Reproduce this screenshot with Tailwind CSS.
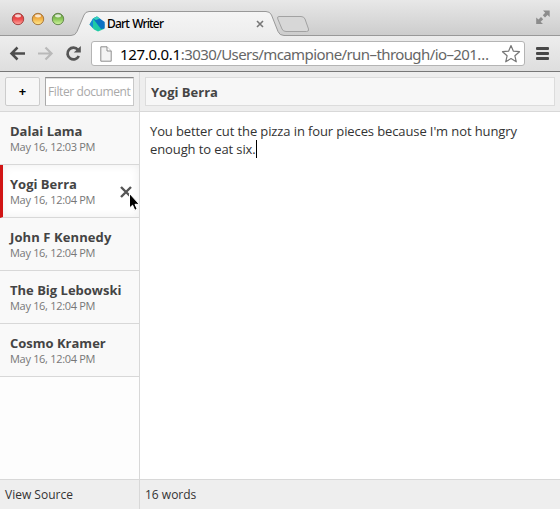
<!DOCTYPE html>
<html lang="en">
<head>
<meta charset="utf-8">
<title>Dart Writer</title>
<script src="https://cdn.jsdelivr.net/npm/@tailwindcss/browser@4"></script>
</head>
<body class="w-[560px] h-[509px] overflow-hidden flex flex-col bg-white font-['Open_Sans',sans-serif] text-[13px] text-[#333]">
  <!-- Tab strip -->
  <header class="relative h-9 shrink-0 bg-linear-to-b from-[#e8e8e8] to-[#cccccc] flex items-center">
    <svg class="absolute inset-0" width="560" height="36" viewBox="0 0 560 36">
      <defs>
        <linearGradient id="tab" x1="0" y1="0" x2="0" y2="1"><stop offset="0" stop-color="#f5f5f5"/><stop offset="1" stop-color="#ededed"/></linearGradient>
        <linearGradient id="r" x1="0" y1="0" x2="0" y2="1"><stop offset="0" stop-color="#c9413f"/><stop offset=".5" stop-color="#ee4a4b"/><stop offset="1" stop-color="#ffa9a2"/></linearGradient>
        <linearGradient id="y" x1="0" y1="0" x2="0" y2="1"><stop offset="0" stop-color="#cf8331"/><stop offset=".5" stop-color="#f3b347"/><stop offset="1" stop-color="#ffeb91"/></linearGradient>
        <linearGradient id="g" x1="0" y1="0" x2="0" y2="1"><stop offset="0" stop-color="#62913f"/><stop offset=".5" stop-color="#89c658"/><stop offset="1" stop-color="#d3f6a2"/></linearGradient>
      </defs>
      <path d="M0 35.500H71Q75.500 35.500 77 31.500L84 15Q85.500 11.500 89 11.500H266Q270 11.500 271.500 15L278 31.500Q279.500 35.500 284 35.500H560V37H0Z" fill="url(#tab)" stroke="#999"/>
      <path d="M279 16.500H301Q304 16.500 305 19L308.500 29Q309.300 31.500 306.500 31.500H286Q283 31.500 282 29L277.800 19Q276.800 16.500 279 16.500Z" fill="#d7d7d7" stroke="#a2a2a2"/>
      <g stroke-width="1">
        <circle cx="18" cy="19" r="5.700" fill="url(#r)" stroke="#a84443"/>
        <circle cx="38" cy="19" r="5.700" fill="url(#y)" stroke="#aa7a3e"/>
        <circle cx="58" cy="19" r="5.700" fill="url(#g)" stroke="#668a50"/>
      </g>
      <g fill="#fff" fill-opacity=".75"><ellipse cx="18" cy="15.800" rx="3" ry="1.600"/><ellipse cx="38" cy="15.800" rx="3" ry="1.600"/><ellipse cx="58" cy="15.800" rx="3" ry="1.600"/></g>
      <path d="M89.500 24.500L93 18.500L97 16.500L104.500 24L104 29L98 31.500L94 29.500Z" fill="#1fcaa5"/>
      <path d="M93 18.500L97 16.500L104.700 22V28.500L101 29Z" fill="#0b72c4"/>
      <path d="M93 18.500L97 16.500L100 18.500L96 20Z" fill="#35d3bb"/>
      <path d="M89.500 24.500L93 18.500V28Z" fill="#1789d4"/>
      <path d="M257 21l6 6m0-6l-6 6" stroke="#777" stroke-width="1.600"/>
      <g fill="#8c8c8c"><path d="M543 10.500H549.700V17L547.500 15L545 17.500L542.800 15.200L545.200 12.800Z"/><path d="M536.200 17.500L538.500 19.500L541 17L543.200 19.200L540.600 21.800L543 24H536.200Z"/></g>
    </svg>
    <h1 class="relative ml-[107px] mt-[11px] text-[12px] leading-4 font-medium font-['Noto_Sans',sans-serif] text-black tracking-[-0.87px] [word-spacing:1px]"><span class="tracking-[-0.85px]">Dart Writer</span></h1>
  </header>

  <!-- Navigation bar -->
  <nav class="h-9 shrink-0 flex items-center bg-linear-to-b from-[#ededed] to-[#dedede] border-b border-[#777]">
    <svg class="shrink-0" width="91" height="35" viewBox="0 36 91 35" fill="none">
      <path d="M25 53.500H12M17.500 47.500L11.500 53.500L17.500 59.500" stroke="#4c4c4c" stroke-width="2.500"/>
      <path d="M38 53.500H51M45.500 47.500L51.500 53.500L45.500 59.500" stroke="#b9b9b9" stroke-width="2.200"/>
      <path d="M78 49.800A5.900 5.900 0 1 0 78.800 56" stroke="#555" stroke-width="2.700"/><path d="M80.800 46V52.600H73.800Z" fill="#555"/>
    </svg>
    <div class="w-[434px] h-[25px] shrink-0 border border-[#b4b4b4] rounded-[3px] bg-white flex items-center">
      <svg class="ml-[8px] shrink-0" width="12" height="16" viewBox="0 0 12 16"><path d="M.8.800H7L11.200 5V15.200H.8Z" fill="#f3f3f3" stroke="#8d8d8d"/><path d="M7 .8V5H11.200" fill="#fff" stroke="#8d8d8d"/></svg>
      <p class="ml-[8px] w-[381px] shrink-0 whitespace-nowrap text-[15px] leading-6 font-['Noto_Sans',sans-serif] text-[#666] tracking-[-0.59px]"><span class="text-black tracking-[-0.3px]">127.0.0.1</span>:3030/Users/mcampione/run–through/io–201…</p>
      <svg class="shrink-0" width="20" height="20" viewBox="0 0 20 20"><path d="M10 1.500L12.400 7.200L18.500 7.700L13.900 11.800L15.300 17.800L10 14.600L4.700 17.800L6.100 11.800L1.500 7.700L7.600 7.200Z" fill="#fff" stroke="#777" stroke-width="1.200" stroke-linejoin="round"/></svg>
    </div>
    <div class="ml-[11px] flex flex-col gap-[2px]"><i class="w-[13px] h-[3px] rounded-[1px] bg-[#484848]"></i><i class="w-[13px] h-[3px] rounded-[1px] bg-[#484848]"></i><i class="w-[13px] h-[3px] rounded-[1px] bg-[#484848]"></i></div>
  </nav>

  <main class="flex-1 min-h-0 flex">
    <aside class="relative w-[140px] shrink-0 border-r border-[#d8d8d8] flex flex-col bg-[#fdfdfd]">
      <div class="h-10 shrink-0 bg-[#eee] border-b border-[#d8d8d8] pl-[5px] pt-[5px] flex gap-[5px]">
        <button class="w-[35px] h-[29px] border border-[#ccc] rounded-[2px] bg-[#f7f7f7] font-bold text-black leading-[27px]">+</button>
        <div class="w-[89px] h-[29px] bg-white border border-[#c8c8c8] border-t-[#888] border-l-[#aaa] shadow-[inset_0_1px_0_#ddd] pl-[2px] pr-[2px]"><div class="overflow-hidden whitespace-nowrap text-[12px] leading-[27px] text-[#a9a9a9] tracking-[-0.4px]">Filter documents</div></div>
      </div>
      <ul class="flex-1">
        <li class="h-[53px] border-b border-[#d8d8d8] bg-[#f9f9f9] pl-[10px] pt-[10px]"><h2 class="font-bold leading-[18px] text-[#444]">Dalai Lama</h2><p class="text-[11px] leading-[13px] text-[#777] tracking-[-0.31px]">May 16, 12:03 PM</p></li>
        <li class="h-[53px] border-b border-[#d8d8d8] border-l-[3px] border-l-[#d11414] bg-white shadow-[inset_0_0_10px_#eeeeee] pl-[7px] pt-[10px]"><h2 class="font-bold leading-[18px] text-[#444]">Yogi Berra</h2><p class="text-[11px] leading-[13px] text-[#777] tracking-[-0.31px]">May 16, 12:04 PM</p></li>
        <li class="h-[53px] border-b border-[#d8d8d8] bg-[#f9f9f9] pl-[10px] pt-[10px]"><h2 class="font-bold leading-[18px] text-[#444] tracking-[0.1px]">John F Kennedy</h2><p class="text-[11px] leading-[13px] text-[#777] tracking-[-0.31px]">May 16, 12:04 PM</p></li>
        <li class="h-[53px] border-b border-[#d8d8d8] bg-[#f9f9f9] pl-[10px] pt-[10px]"><h2 class="font-bold leading-[18px] text-[#444]">The Big Lebowski</h2><p class="text-[11px] leading-[13px] text-[#777] tracking-[-0.31px]">May 16, 12:04 PM</p></li>
        <li class="h-[53px] border-b border-[#d8d8d8] bg-[#f9f9f9] pl-[10px] pt-[10px]"><h2 class="font-bold leading-[18px] text-[#444]">Cosmo Kramer</h2><p class="text-[11px] leading-[13px] text-[#777] tracking-[-0.31px]">May 16, 12:04 PM</p></li>
      </ul>
      <!-- Delete mark and mouse pointer -->
      <svg class="absolute left-[118px] top-[112px]" width="24" height="30" viewBox="118 184 24 30">
        <path d="M121 187L131 197M131 187L121 197" stroke="#555" stroke-width="2.400"/>
        <path d="M129.500 193.500V208L132.600 205.200L134.800 210.300L137.200 209.200L135 204.300H139.300Z" fill="#000" stroke="#fff"/>
      </svg>
      <footer class="h-[30px] border-t border-[#d8d8d8] bg-[#eee] pl-[5px] text-[12px] leading-[30px]">View Source</footer>
    </aside>
    <section class="flex-1 flex flex-col">
      <div class="h-10 shrink-0 bg-[#eee] border-b border-[#d8d8d8] p-[5px]"><div class="h-[29px] w-[410px] border border-[#dcdcdc] bg-[#f7f7f7] pl-[5px] font-bold leading-[29px] text-[#444]">Yogi Berra</div></div>
      <div class="flex-1 p-[10px] leading-[18px] tracking-[-0.11px]">You better cut the pizza in four pieces because I'm not hungry<br>enough to eat six.<span class="inline-block w-px h-[18px] bg-black align-top"></span></div>
      <footer class="h-[30px] border-t border-[#d8d8d8] bg-[#eee] pl-[5px] text-[12px] leading-[30px]">16 words</footer>
    </section>
  </main>
</body>
</html>
